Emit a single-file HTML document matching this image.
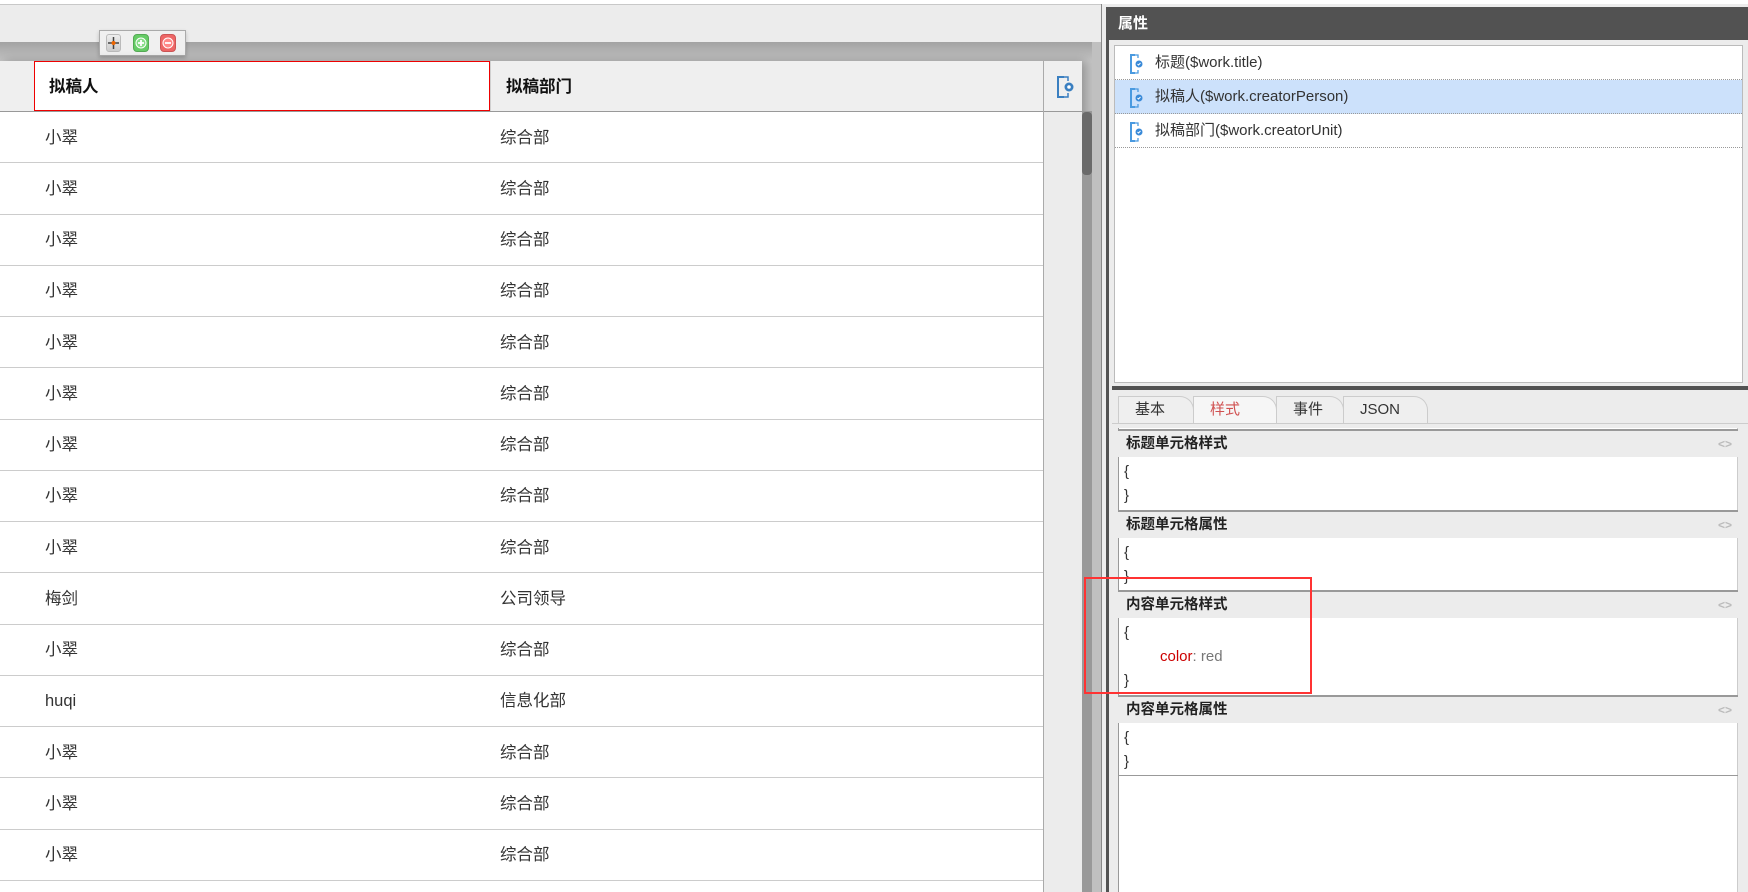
<!DOCTYPE html>
<html><head><meta charset="utf-8"><style>
*{margin:0;padding:0;box-sizing:border-box}
body{width:1748px;height:892px;overflow:hidden;background:#fff;position:relative;font-family:"Liberation Sans","Noto Sans CJK SC",sans-serif;color:#333}
.a{position:absolute}
.row{position:absolute;left:0;width:1043px;height:1px;background:#ccc}
.t{position:absolute;font-size:16.5px;color:#333;line-height:20px}
.sec{position:absolute;left:1118px;width:620px;border-top:2px solid #999}
.sh{height:26px;background:#ececec;font-weight:bold;font-size:14.5px;color:#222;padding-left:8px;line-height:26px;position:relative}
.sh span{position:absolute;right:6px;top:0;color:#bbb;font-size:12px;font-weight:bold}
.sb{font-size:15px;color:#333;padding-left:6px;line-height:24px;padding-top:3px}
.tab{position:absolute;top:396px;height:27px;border:1px solid #ccc;border-bottom:none;border-top-right-radius:14px;background:#efefef;font-size:15px;line-height:26px;padding-left:16px}
.li{position:absolute;left:1115px;width:627px;height:34px;border-bottom:1px dotted #999;font-size:15px;line-height:34px;padding-left:40px;color:#333}
.ic{position:absolute;left:14px;top:8px}
</style></head><body>
<!-- left top area -->
<div class="a" style="left:0;top:0;width:1101px;height:4px;background:#fff"></div>
<div class="a" style="left:0;top:4px;width:1101px;height:1px;background:#c8c8c8"></div>
<div class="a" style="left:0;top:5px;width:1101px;height:37px;background:#ececec"></div>
<div class="a" style="left:0;top:42px;width:1101px;height:850px;background:linear-gradient(#a2a2a2,#c4c4c4 19px,#c0c0c0)"></div>
<!-- toolbar -->
<div class="a" style="left:99px;top:30px;width:87px;height:26px;background:#f0f0f0;border:1px solid #aaa;box-shadow:0 2px 4px rgba(0,0,0,.2)"></div>
<div class="a" style="left:106px;top:34px;width:15px;height:18px;border-radius:3px;background:linear-gradient(#eee,#ccc);border:1px solid #bbb"><svg width="13" height="16" viewBox="0 0 13 16"><path d="M6.5 2v12M1 8h11" stroke="#444" stroke-width="1.5"/><circle cx="6.5" cy="8" r="2" fill="#e60"/></svg></div>
<div class="a" style="left:133px;top:34px;width:16px;height:18px;border-radius:4px;background:#6c6;border:1px solid #5a5"><svg width="14" height="16" viewBox="0 0 14 16"><circle cx="7" cy="8" r="5" fill="#8d8" stroke="#fff"/><path d="M7 5v6M4 8h6" stroke="#fff" stroke-width="1.8"/></svg></div>
<div class="a" style="left:160px;top:34px;width:16px;height:18px;border-radius:4px;background:#e66;border:1px solid #c55"><svg width="14" height="16" viewBox="0 0 14 16"><circle cx="7" cy="8" r="5" fill="#f88" stroke="#fff"/><path d="M4 8h6" stroke="#fff" stroke-width="1.8"/></svg></div>
<!-- table -->
<div class="a" style="left:0;top:61px;width:1082px;height:831px;background:#fff;box-shadow:4px 0 10px rgba(0,0,0,.25)"></div>
<div class="a" style="left:0;top:61px;width:1082px;height:50px;background:#efefef"></div>
<div class="a" style="left:34px;top:61px;width:456px;height:50px;background:#fff;border:1.5px solid #e00"></div>
<div class="a" style="left:490px;top:61px;width:1px;height:50px;background:#d0d0d0"></div>
<div class="a" style="left:0;top:111px;width:1082px;height:1px;background:#999"></div>
<div class="t" style="left:49px;top:77px;font-weight:bold;color:#111">拟稿人</div>
<div class="t" style="left:506px;top:77px;font-weight:bold;color:#111">拟稿部门</div>
<div class="a" style="left:1043px;top:61px;width:1px;height:831px;background:#aaa"></div>
<div class="a" style="left:1044px;top:112px;width:38px;height:780px;background:#ececec"></div>
<svg class="a" style="left:1056px;top:76px" width="20" height="22" viewBox="0 0 20 22"><path d="M8 1H2v20h6" fill="none" stroke="#3a7fc0" stroke-width="2"/><path d="M8 1h4v4M8 21h4v-4" fill="none" stroke="#3a7fc0" stroke-width="1.5"/><circle cx="13" cy="11" r="4.5" fill="#3a7fc0"/><circle cx="13" cy="11" r="1.8" fill="#fff"/></svg>
<div class="a" style="left:1082px;top:111px;width:10px;height:781px;background:#999"></div>
<div class="a" style="left:1082px;top:112px;width:10px;height:63px;background:#6a6a6a;border-radius:4px"></div>
<div class="a" style="left:1092px;top:42px;width:9px;height:850px;background:#c0c0c0"></div>
<div class="a" style="left:1101px;top:4px;width:1px;height:888px;background:#888"></div>
<div class="a" style="left:1102px;top:4px;width:646px;height:888px;background:#ececec"></div>

<div class="row" style="top:162px"></div><div class="row" style="top:214px"></div><div class="row" style="top:265px"></div><div class="row" style="top:316px"></div><div class="row" style="top:367px"></div><div class="row" style="top:419px"></div><div class="row" style="top:470px"></div><div class="row" style="top:521px"></div><div class="row" style="top:572px"></div><div class="row" style="top:624px"></div><div class="row" style="top:675px"></div><div class="row" style="top:726px"></div><div class="row" style="top:777px"></div><div class="row" style="top:829px"></div><div class="row" style="top:880px"></div>

<div class="t" style="left:45px;top:128px">小翠</div><div class="t" style="left:500px;top:128px">综合部</div>
<div class="t" style="left:45px;top:179px">小翠</div><div class="t" style="left:500px;top:179px">综合部</div>
<div class="t" style="left:45px;top:230px">小翠</div><div class="t" style="left:500px;top:230px">综合部</div>
<div class="t" style="left:45px;top:281px">小翠</div><div class="t" style="left:500px;top:281px">综合部</div>
<div class="t" style="left:45px;top:333px">小翠</div><div class="t" style="left:500px;top:333px">综合部</div>
<div class="t" style="left:45px;top:384px">小翠</div><div class="t" style="left:500px;top:384px">综合部</div>
<div class="t" style="left:45px;top:435px">小翠</div><div class="t" style="left:500px;top:435px">综合部</div>
<div class="t" style="left:45px;top:486px">小翠</div><div class="t" style="left:500px;top:486px">综合部</div>
<div class="t" style="left:45px;top:538px">小翠</div><div class="t" style="left:500px;top:538px">综合部</div>
<div class="t" style="left:45px;top:589px">梅剑</div><div class="t" style="left:500px;top:589px">公司领导</div>
<div class="t" style="left:45px;top:640px">小翠</div><div class="t" style="left:500px;top:640px">综合部</div>
<div class="t" style="left:45px;top:691px">huqi</div><div class="t" style="left:500px;top:691px">信息化部</div>
<div class="t" style="left:45px;top:743px">小翠</div><div class="t" style="left:500px;top:743px">综合部</div>
<div class="t" style="left:45px;top:794px">小翠</div><div class="t" style="left:500px;top:794px">综合部</div>
<div class="t" style="left:45px;top:845px">小翠</div><div class="t" style="left:500px;top:845px">综合部</div>

<!-- right panel -->
<div class="a" style="left:1106px;top:7px;width:642px;height:33px;background:#525252;color:#fff;font-weight:bold;font-size:15px;line-height:33px;padding-left:12px">属性</div>
<div class="a" style="left:1106px;top:40px;width:3px;height:852px;background:#525252"></div>
<div class="a" style="left:1114px;top:45px;width:629px;height:338px;background:#fff;border:1px solid #bbb"></div>
<div class="li" style="top:46px"><svg class="ic" width="16" height="20" viewBox="0 0 16 20"><path d="M6 1H2v18h4" fill="none" stroke="#4a9ae0" stroke-width="2"/><path d="M6 1h3v3M6 19h3v-3" fill="none" stroke="#4a9ae0" stroke-width="1.3"/><circle cx="10" cy="10" r="3.5" fill="#3a8ad8"/><path d="M8.5 10l1 1 2-2" stroke="#fff" fill="none"/></svg>标题($work.title)</div>
<div class="li" style="top:80px;background:#cce1fb"><svg class="ic" width="16" height="20" viewBox="0 0 16 20"><path d="M6 1H2v18h4" fill="none" stroke="#4a9ae0" stroke-width="2"/><path d="M6 1h3v3M6 19h3v-3" fill="none" stroke="#4a9ae0" stroke-width="1.3"/><circle cx="10" cy="10" r="3.5" fill="#3a8ad8"/><path d="M8.5 10l1 1 2-2" stroke="#fff" fill="none"/></svg>拟稿人($work.creatorPerson)</div>
<div class="li" style="top:114px"><svg class="ic" width="16" height="20" viewBox="0 0 16 20"><path d="M6 1H2v18h4" fill="none" stroke="#4a9ae0" stroke-width="2"/><path d="M6 1h3v3M6 19h3v-3" fill="none" stroke="#4a9ae0" stroke-width="1.3"/><circle cx="10" cy="10" r="3.5" fill="#3a8ad8"/><path d="M8.5 10l1 1 2-2" stroke="#fff" fill="none"/></svg>拟稿部门($work.creatorUnit)</div>
<div class="a" style="left:1112px;top:386px;width:636px;height:4px;background:#525252"></div>
<div class="tab" style="left:1118px;width:76px">基本</div>
<div class="tab" style="left:1193px;width:84px;background:#f6f6f6;color:#d05050">样式</div>
<div class="tab" style="left:1276px;width:68px">事件</div>
<div class="tab" style="left:1343px;width:85px">JSON</div>
<div class="a" style="left:1112px;top:423px;width:636px;height:1px;background:#ccc"></div>
<div class="a" style="left:1118px;top:428px;width:620px;height:464px;background:#fff;border-left:1px solid #999;border-right:1px solid #ccc"></div>

<div class="sec" style="top:429px;height:82px"><div class="sh">标题单元格样式<span>&lt;&gt;</span></div><div class="sb">{<br>}</div></div>
<div class="sec" style="top:510px;height:82px"><div class="sh">标题单元格属性<span>&lt;&gt;</span></div><div class="sb">{<br>}</div></div>
<div class="sec" style="top:590px;height:106px"><div class="sh">内容单元格样式<span>&lt;&gt;</span></div><div class="sb">{<br><span style="padding-left:36px;color:#c00">color</span><span style="color:#777">: red</span><br>}</div></div>
<div class="sec" style="top:695px;height:81px;border-bottom:1px solid #999"><div class="sh">内容单元格属性<span>&lt;&gt;</span></div><div class="sb">{<br>}</div></div>

<div class="a" style="left:1084px;top:577px;width:228px;height:117px;border:2.5px solid #f33"></div>
</body></html>
